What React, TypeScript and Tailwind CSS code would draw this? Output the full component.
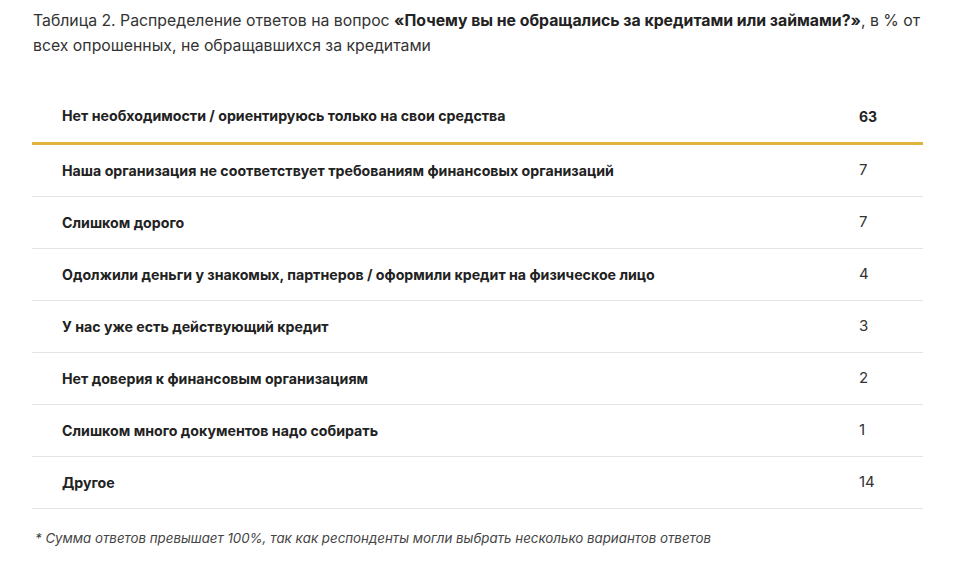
const rows: { label: string; value: string }[] = [
  { label: 'Наша организация не соответствует требованиям финансовых организаций', value: '7' },
  { label: 'Слишком дорого', value: '7' },
  { label: 'Одолжили деньги у знакомых, партнеров / оформили кредит на физическое лицо', value: '4' },
  { label: 'У нас уже есть действующий кредит', value: '3' },
  { label: 'Нет доверия к финансовым организациям', value: '2' },
  { label: 'Слишком много документов надо собирать', value: '1' },
  { label: 'Другое', value: '14' },
];

export default function App() {
  return (
    <div className="w-[971px] h-[573px] bg-white overflow-hidden font-['Inter',sans-serif] text-[#333]">
      <p className="ml-[33px] w-[892px] pt-[8px] text-[15.8px] leading-[25px]">
        Таблица 2. Распределение ответов на вопрос{' '}
        <b className="font-bold text-[#222]">«Почему вы не обращались за кредитами или займами?»</b>, в % от всех
        опрошенных, не обращавшихся за кредитами
      </p>

      <div className="ml-[32px] w-[891px] mt-[33px]">
        <div className="grid grid-cols-[1fr_64px] items-center h-[54px] border-b-[3px] border-[#e0b43c] pb-[1px]">
          <span className="pl-[30px] text-[14.2px] font-bold text-[#222]">
            Нет необходимости / ориентируюсь только на свои средства
          </span>
          <span className="text-[14px] font-bold text-[#222]">63</span>
        </div>
        {rows.map(row => (
          <div
            key={row.label}
            className="grid grid-cols-[1fr_64px] items-center h-[52px] border-b border-[#e3e3e3]"
          >
            <span className="pl-[30px] text-[14.2px] font-bold text-[#222]">{row.label}</span>
            <span className="text-[15px] text-[#333]">{row.value}</span>
          </div>
        ))}
      </div>

      <p className="pl-[35px] mt-[20px] text-[13.3px] italic text-[#444]">
        * Сумма ответов превышает 100%, так как респонденты могли выбрать несколько вариантов ответов
      </p>
    </div>
  );
}
